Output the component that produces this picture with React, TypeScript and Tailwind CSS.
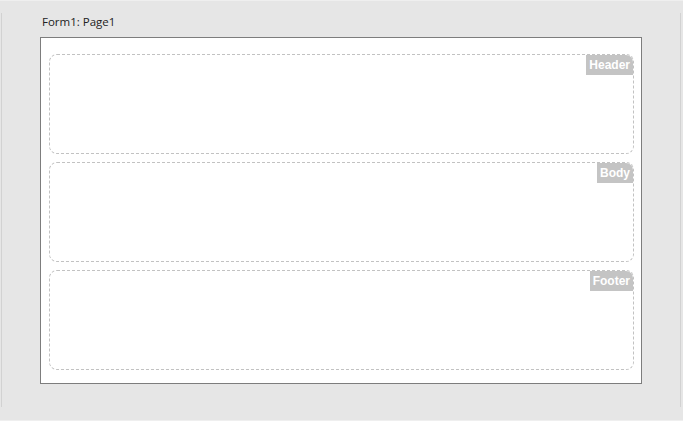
import React from "react";

function Section({ label }: { label: string }) {
  return (
    <div className="relative h-[100px] w-full rounded-[8px] border border-dashed border-[#c2c2c2]">
      <div className="absolute right-0 top-0 h-[20px] rounded-tr-[7px] bg-[#c4c4c4] px-[3px] text-[12px] font-bold leading-[20px] text-white [font-family:'Liberation_Sans',Arial,sans-serif]">
        {label}
      </div>
    </div>
  );
}

export default function App() {
  return (
    <div className="flex h-[421px] w-[683px] border-y border-y-[#efefef] bg-[#e6e6e6]">
      <div className="ml-[1px] mt-[12px] h-[394px] w-px bg-[#d2d2d2]" />
      <div className="ml-[38px] flex flex-col">
        <div className="ml-[2px] mt-[13px] h-[23px] text-[11.5px] leading-[16px] text-[#222] [font-family:'Open_Sans','Noto_Sans',sans-serif]">
          Form1: Page1
        </div>
        <div className="flex h-[347px] w-[602px] flex-col gap-[8px] border border-[#7d7d7d] bg-white pl-[8px] pr-[7px] pt-[16px]">
          <Section label="Header" />
          <Section label="Body" />
          <Section label="Footer" />
        </div>
      </div>
      <div className="ml-auto mr-[2px] mt-[12px] h-[394px] w-px bg-[#d2d2d2]" />
    </div>
  );
}
